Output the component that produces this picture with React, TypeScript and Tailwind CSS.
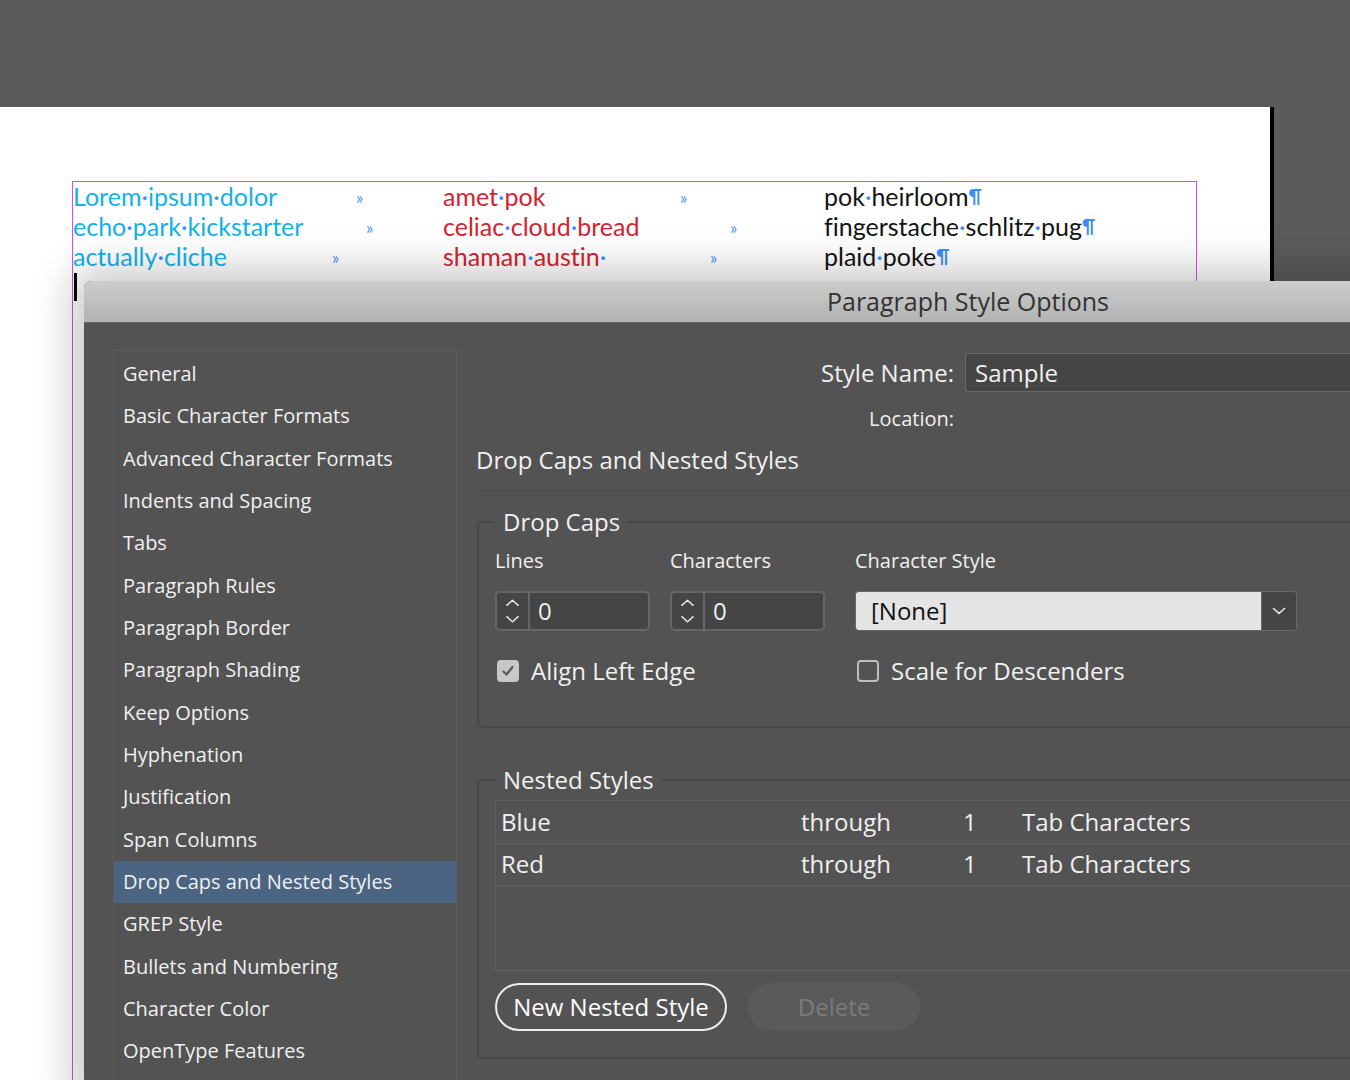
import React from "react";

const ui = { fontFamily: '"Open Sans", "Noto Sans", sans-serif' };
const pageFont = { fontFamily: 'Lato, "Open Sans", sans-serif' };

function Dotted({ text, color }: { text: string; color: string }) {
  const parts = text.split(" ");
  return (
    <span className={color}>
      {parts.map((p, i) => (
        <React.Fragment key={i}>
          {p}
          {i < parts.length - 1 && <span className="text-[#3d8ef5]">·</span>}
        </React.Fragment>
      ))}
    </span>
  );
}

function Chev() {
  return <span className="text-[17px] text-[#4a96f2] relative top-[2px]">»</span>;
}

function Pil() {
  return <span className="text-[18px] font-bold text-[#3d8ef5]">¶</span>;
}

const lines = [
  { a: "Lorem ipsum dolor", aw: "w-[283px]", b: "amet pok", bw: "w-[237px]", c: "pok heirloom" },
  { a: "echo park kickstarter", aw: "w-[293px]", b: "celiac cloud bread", bw: "w-[287px]", c: "fingerstache schlitz pug" },
  { a: "actually cliche", aw: "w-[259px]", b: "shaman austin ", bw: "w-[267px]", c: "plaid poke" },
];

const items = [
  "General",
  "Basic Character Formats",
  "Advanced Character Formats",
  "Indents and Spacing",
  "Tabs",
  "Paragraph Rules",
  "Paragraph Border",
  "Paragraph Shading",
  "Keep Options",
  "Hyphenation",
  "Justification",
  "Span Columns",
  "Drop Caps and Nested Styles",
  "GREP Style",
  "Bullets and Numbering",
  "Character Color",
  "OpenType Features",
];

function Spinner() {
  return (
    <div className="flex h-[40px] w-[155px] rounded-[5px] border-2 border-[#676767] bg-[#454545]">
      <div className="w-[33px] border-r-2 border-[#676767] flex items-center justify-center">
        <svg width="33" height="36" viewBox="0 0 33 36" fill="none" stroke="#e8e8e8" strokeWidth="1.5" strokeLinecap="round" strokeLinejoin="round">
          <path d="M10.5 12 L16.5 6.5 L22.5 12" />
          <path d="M10.5 24 L16.5 29.5 L22.5 24" />
        </svg>
      </div>
      <div className="pl-[8px] text-[24px] leading-[36px] text-[#f0f0f0]">0</div>
    </div>
  );
}

export default function App() {
  return (
    <div className="relative w-[1350px] h-[1080px] overflow-hidden bg-[#5b5b5b]">
      <div className="h-[107px]" />
      {/* page */}
      <div className="w-[1274px] h-[973px] bg-white border-r-4 border-black" style={pageFont}>
        <div className="pt-[74px] pl-[72px]">
          <div className="w-[1125px] h-[900px] border border-[#d84cf5]">
            {lines.map((l, i) => (
              <div key={i} className="flex h-[30px] items-center text-[25px] leading-[28px] pb-[3px] whitespace-nowrap" style={{ fontVariantLigatures: "none" }}>
                <div className="w-[370px] flex items-center">
                  <span className={"inline-block " + l.aw}>
                    <Dotted text={l.a} color="text-[#13b1ea]" />
                  </span>
                  <Chev />
                </div>
                <div className="w-[381px] flex items-center">
                  <span className={"inline-block " + l.bw}>
                    <Dotted text={l.b} color="text-[#d3232f]" />
                  </span>
                  <Chev />
                </div>
                <div className="flex items-center">
                  <Dotted text={l.c} color="text-[#141414]" />
                  <Pil />
                </div>
              </div>
            ))}
            <div className="ml-[1px] mt-[1px] w-[3px] h-[28px] bg-black" />
          </div>
        </div>
      </div>

      {/* dialog */}
      <div
        className="absolute left-[84px] top-[281px] w-[1768px] h-[820px] rounded-t-[7px] bg-[#535353] shadow-[0_0_40px_12px_rgba(0,0,0,0.22)] overflow-hidden text-[#f0f0f0] font-medium"
        style={ui}
      >
        <div className="h-[42px] bg-gradient-to-b from-[#cdcdcd] to-[#b2b2b2] border-b border-[#686868] flex items-center justify-center">
          <span className="text-[25px] text-[#333333] font-normal">Paragraph Style Options</span>
        </div>
        <div className="flex">
          {/* left list */}
          <div className="ml-[29px] mt-[27px] w-[344px] h-[760px] border border-[#5d5d5d] pt-[2px]">
            {items.map((it) => (
              <div
                key={it}
                className={
                  "h-[42.33px] flex items-center pl-[9px] text-[20px] " +
                  (it === "Drop Caps and Nested Styles" ? "bg-[#4a6481]" : "")
                }
              >
                {it}
              </div>
            ))}
          </div>

          {/* right pane */}
          <div className="ml-[19px] flex-1 pt-[30px]">
            <div className="flex h-[39px] items-center">
              <div className="w-[478px] text-right text-[24px]">Style Name:</div>
              <div className="ml-[11px] flex-1 h-[39px] bg-[#454545] border border-r-0 border-[#686868] rounded-l-[3px] flex items-center pl-[9px] text-[24px]">
                Sample
              </div>
            </div>
            <div className="mt-[15px] h-[24px] flex items-center">
              <div className="w-[478px] text-right text-[20px]">Location:</div>
            </div>
            <div className="mt-[13px] h-[32px] flex items-center text-[24px]">Drop Caps and Nested Styles</div>
            <div className="mt-[14px] h-px bg-[#4b4b4b]" />

            <fieldset className="mt-[15px] ml-[1px] border-2 border-[#474747] rounded-[6px] px-[16px] pb-[40px]">
              <legend className="ml-[0px] px-[8px] text-[24px] leading-[32px]">Drop Caps</legend>
              <div className="flex mt-[11px] h-[24px] items-center text-[20px]">
                <div className="w-[175px]">Lines</div>
                <div className="w-[185px]">Characters</div>
                <div>Character Style</div>
              </div>
              <div className="flex mt-[18px]">
                <div className="w-[175px]">
                  <Spinner />
                </div>
                <div className="w-[185px]">
                  <Spinner />
                </div>
                <div className="flex h-[40px] w-[442px] rounded-[4px] border border-[#6a6a6a] overflow-hidden">
                  <div className="flex-1 bg-[#e4e4e4] text-[#111] text-[24px] font-normal flex items-center pl-[15px]">[None]</div>
                  <div className="w-[35px] bg-[#454545] border-l border-[#6a6a6a] flex items-center justify-center">
                    <svg width="16" height="10" viewBox="0 0 16 10" fill="none" stroke="#eeeeee" strokeWidth="1.6" strokeLinecap="round" strokeLinejoin="round">
                      <path d="M2.5 2.5 L8 7.5 L13.5 2.5" />
                    </svg>
                  </div>
                </div>
              </div>
              <div className="flex mt-[25px] h-[30px] items-center">
                <div className="w-[360px] flex items-center pl-[2px]">
                  <div className="w-[22px] h-[22px] rounded-[4px] bg-[#c8c8c8] flex items-center justify-center">
                    <svg width="16" height="16" viewBox="0 0 16 16" fill="none" stroke="#5a5a5a" strokeWidth="2.2" strokeLinecap="round" strokeLinejoin="round">
                      <path d="M3.5 8.5 L6.5 11.5 L12.5 4" />
                    </svg>
                  </div>
                  <span className="ml-[12px] text-[24px]">Align Left Edge</span>
                </div>
                <div className="flex items-center pl-[2px]">
                  <div className="w-[22px] h-[22px] rounded-[4px] border-2 border-[#bdbdbd]" />
                  <span className="ml-[12px] text-[24px]">Scale for Descenders</span>
                </div>
              </div>
            </fieldset>

            <fieldset className="mt-[36px] ml-[1px] border-2 border-[#474747] rounded-[6px] px-[16px] pb-[26px]">
              <legend className="ml-[0px] px-[8px] text-[24px] leading-[32px]">Nested Styles</legend>
              <div className="mt-[4px] h-[171px] border border-[#5f5f5f]">
                {[
                  ["Blue", "through", "1", "Tab Characters"],
                  ["Red", "through", "1", "Tab Characters"],
                ].map((r) => (
                  <div key={r[0]} className="h-[42.5px] border-b border-[#5e5e5e] flex items-center text-[24px] pl-[5px]">
                    <div className="w-[300px]">{r[0]}</div>
                    <div className="w-[162px]">{r[1]}</div>
                    <div className="w-[59px]">{r[2]}</div>
                    <div>{r[3]}</div>
                  </div>
                ))}
              </div>
              <div className="mt-[12px] flex">
                <div className="h-[48px] w-[232px] rounded-full border-2 border-[#eeeeee] flex items-center justify-center text-[24px] text-white">
                  New Nested Style
                </div>
                <div className="ml-[21px] h-[48px] w-[172px] rounded-full bg-[#5a5a5a] flex items-center justify-center text-[24px] text-[#7b7b7b]">
                  Delete
                </div>
              </div>
            </fieldset>
          </div>
        </div>
      </div>
    </div>
  );
}
